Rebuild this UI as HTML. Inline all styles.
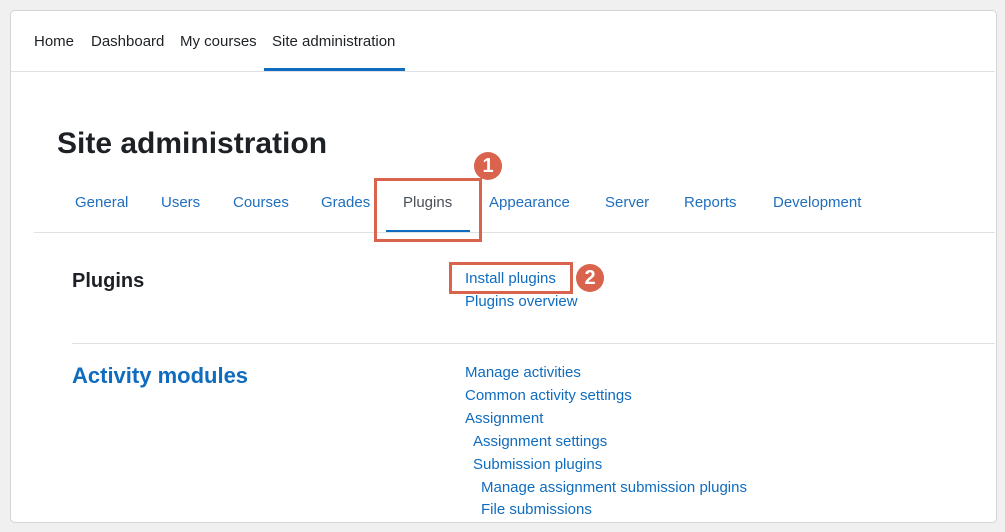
<!DOCTYPE html><html><head><style>
body{margin:0;width:1005px;height:532px;background:#f0f0f0;font-family:"Liberation Sans",sans-serif;position:relative;overflow:hidden}
.a{position:absolute;white-space:nowrap}
.card{position:absolute;left:10px;top:10px;width:985px;height:511px;background:#fff;border:1px solid #d4d4d4;border-radius:5px}
.nav{font-size:15px;color:#1d2125;top:33px}
.tab{font-size:15px;color:#1f6fbf;top:194px}
.l{font-size:15px;color:#0f6cbf}
.hr{position:absolute;height:1px;background:#dee2e6}
.box{position:absolute;border:3.5px solid #d9634c;box-sizing:border-box}
.c{position:absolute;width:28px;height:28px;border-radius:50%;background:#d9634c;color:#fff;font-weight:bold;font-size:20px;text-align:center;line-height:28px}
</style></head><body>
<div class="card"></div>
<div class="a nav" style="left:34px">Home</div>
<div class="a nav" style="left:91px">Dashboard</div>
<div class="a nav" style="left:180px">My courses</div>
<div class="a nav" style="left:272px">Site administration</div>
<div class="a" style="left:264px;top:68px;width:141px;height:3px;background:#0f6cbf"></div>
<div class="hr" style="left:11px;top:71px;width:984px"></div>
<div class="a" style="left:57px;top:127px;font-size:30px;font-weight:bold;color:#1d2125">Site administration</div>
<div class="a tab" style="left:75px">General</div>
<div class="a tab" style="left:161px">Users</div>
<div class="a tab" style="left:233px">Courses</div>
<div class="a tab" style="left:321px">Grades</div>
<div class="a tab" style="left:403px;color:#495057">Plugins</div>
<div class="a tab" style="left:489px">Appearance</div>
<div class="a tab" style="left:605px">Server</div>
<div class="a tab" style="left:684px">Reports</div>
<div class="a tab" style="left:773px">Development</div>
<div class="a" style="left:386px;top:230px;width:84px;height:3px;background:#0f6cbf"></div>
<div class="hr" style="left:34px;top:232px;width:961px"></div>
<div class="a" style="left:72px;top:270px;font-size:20px;font-weight:bold;color:#1d2125">Plugins</div>
<div class="a l" style="left:465px;top:270px">Install plugins</div>
<div class="a l" style="left:465px;top:293px">Plugins overview</div>
<div class="hr" style="left:72px;top:343px;width:923px"></div>
<div class="a" style="left:72px;top:363px;font-size:22px;font-weight:bold;color:#0f6cbf">Activity modules</div>
<div class="a l" style="left:465px;top:364px">Manage activities</div>
<div class="a l" style="left:465px;top:387px">Common activity settings</div>
<div class="a l" style="left:465px;top:410px">Assignment</div>
<div class="a l" style="left:473px;top:433px">Assignment settings</div>
<div class="a l" style="left:473px;top:456px">Submission plugins</div>
<div class="a l" style="left:481px;top:479px">Manage assignment submission plugins</div>
<div class="a l" style="left:481px;top:501px">File submissions</div>
<div class="box" style="left:374px;top:178px;width:108px;height:64px"></div>
<div class="c" style="left:474px;top:152px">1</div>
<div class="box" style="left:449px;top:262px;width:124px;height:32px"></div>
<div class="c" style="left:576px;top:264px">2</div>
</body></html>
